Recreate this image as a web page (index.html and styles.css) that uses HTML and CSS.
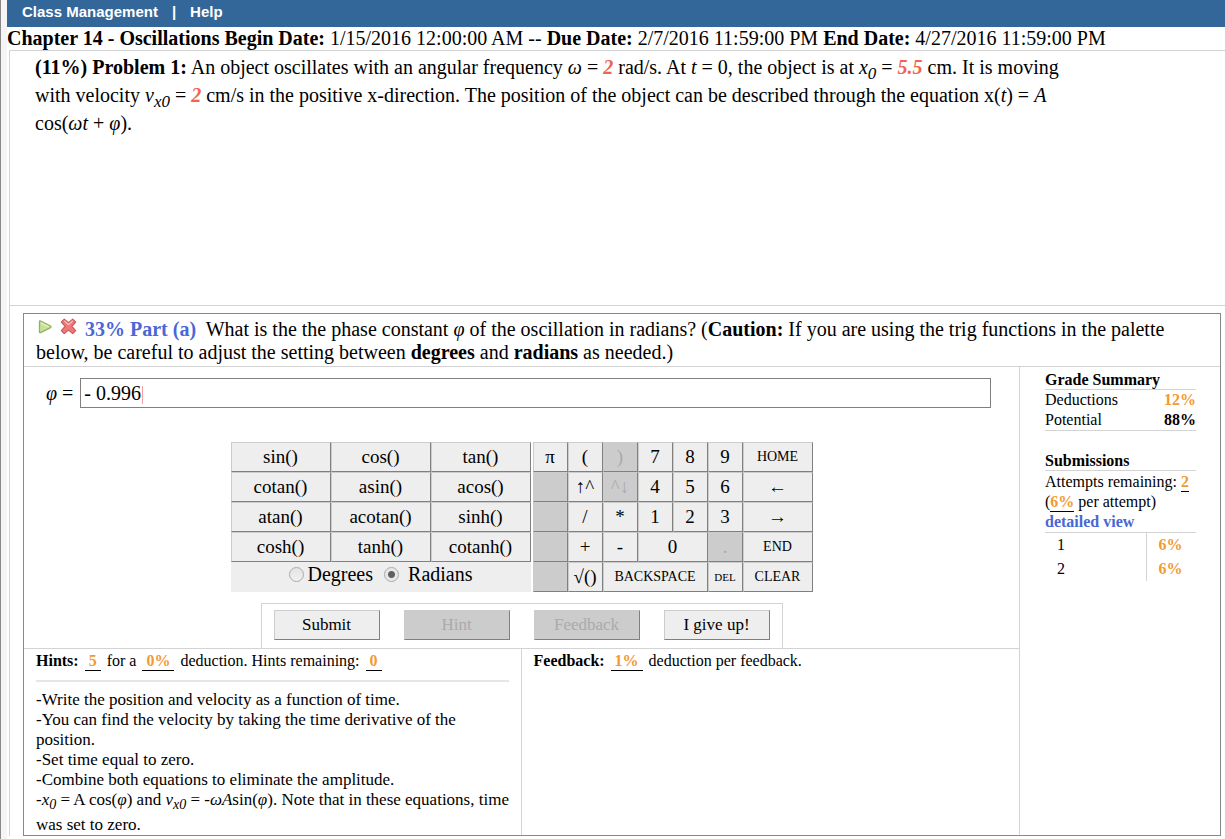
FILE: index.html
```html
<!DOCTYPE html>
<html lang="en">
<head>
  <meta charset="UTF-8">
  <meta name="viewport" content="width=device-width, initial-scale=1.0">
  <title>Chapter 14 - Oscillations</title>
  <link rel="stylesheet" href="styles.css">
</head>
<body>
  <div class="page">
    <!-- Top menu -->
    <nav class="menu">
      <a href="#">Class Management</a>
      <span>|</span>
      <a href="#">Help</a>
    </nav>

    <div class="dates">
      <b>Chapter 14 - Oscillations</b> <b>Begin Date:</b> 1/15/2016 12:00:00 AM -- <b>Due Date:</b> 2/7/2016 11:59:00 PM <b>End Date:</b> 4/27/2016 11:59:00 PM
    </div>

    <main class="assignment">
      <!-- Problem statement -->
      <section class="problem">
        <b>(11%) Problem 1:</b> An object oscillates with an angular frequency <i>ω</i> = <span class="value">2</span> rad/s. At <i>t</i> = 0, the object is at <i>x<sub>0</sub></i> = <span class="value">5.5</span> cm. It is moving with velocity <i>v<sub>x0</sub></i> = <span class="value">2</span> cm/s in the positive x-direction. The position of the object can be described through the equation x(<i>t</i>) = <i>A</i> cos(<i>ωt</i> + <i>φ</i>).
      </section>

      <!-- Part (a) -->
      <section class="part">
        <div class="question">
          <svg class="icon" width="16" height="16" viewBox="0 0 16 16">
            <path d="M3.5 2.5 Q3.5 1.5 4.6 2 L14.5 7 Q15.6 7.8 14.5 8.6 L4.6 13.6 Q3.5 14 3.5 13 Z" fill="#c9e29a" stroke="#8fb35c" stroke-width="1.3"/>
            <path d="M5 4 L12.5 7.8" stroke="#e6f3c8" stroke-width="1.2"/>
          </svg>
          <svg class="icon" width="17" height="17" viewBox="0 0 18 18">
            <path d="M4.5 1.2 L9 5 L13.5 1.2 L16.6 4.4 L12.6 8.8 L16.6 13.4 L13.5 16.6 L9 12.8 L4.5 16.6 L1.4 13.4 L5.4 8.8 L1.4 4.4 Z" fill="#f07878" stroke="#c85858" stroke-width="1.2" stroke-linejoin="round"/>
            <path d="M4.5 3 L9 7 L13.5 3" fill="none" stroke="#f9bcbc" stroke-width="1.4"/>
          </svg>
          <b class="part-name">33% Part (a)</b>&nbsp; What is the the phase constant <i>φ</i> of the oscillation in radians? (<b>Caution:</b> If you are using the trig functions in the palette below, be careful to adjust the setting between <b>degrees</b> and <b>radians</b> as needed.)
        </div>

        <div class="part-body">
          <div class="work">
            <div class="answer">
              <label for="answer"><i>φ</i> =</label>
              <input id="answer" type="text" value="- 0.996">
            </div>

            <!-- Palette: functions on the left, keypad on the right -->
            <div class="palette">
              <div class="functions">
                <button>sin()</button>
                <button>cos()</button>
                <button>tan()</button>
                <button>cotan()</button>
                <button>asin()</button>
                <button>acos()</button>
                <button>atan()</button>
                <button>acotan()</button>
                <button>sinh()</button>
                <button>cosh()</button>
                <button>tanh()</button>
                <button>cotanh()</button>
                <div class="units">
                  <input id="degrees" type="radio" name="unit">
                  <label for="degrees">Degrees</label>
                  <input id="radians" type="radio" name="unit" checked>
                  <label for="radians">Radians</label>
                </div>
              </div>
              <div class="keypad">
                <button>π</button>
                <button>(</button>
                <button disabled>)</button>
                <button>7</button>
                <button>8</button>
                <button>9</button>
                <button class="small">HOME</button>
                <button disabled aria-label="blank"></button>
                <button>↑^</button>
                <button disabled>^↓</button>
                <button>4</button>
                <button>5</button>
                <button>6</button>
                <button>←</button>
                <button disabled aria-label="blank"></button>
                <button>/</button>
                <button>*</button>
                <button>1</button>
                <button>2</button>
                <button>3</button>
                <button>→</button>
                <button disabled aria-label="blank"></button>
                <button>+</button>
                <button>-</button>
                <button class="wide-2">0</button>
                <button disabled>.</button>
                <button class="small">END</button>
                <button disabled aria-label="blank"></button>
                <button>√()</button>
                <button class="small wide-3">BACKSPACE</button>
                <button class="tiny">DEL</button>
                <button class="small">CLEAR</button>
              </div>
            </div>

            <div class="actions">
              <button>Submit</button>
              <button disabled>Hint</button>
              <button disabled>Feedback</button>
              <button>I give up!</button>
            </div>

            <div class="help">
              <div class="hints">
                <div><b>Hints:</b> <span class="blank">5</span> for a <span class="blank">0%</span> deduction. Hints remaining: <span class="blank">0</span></div>
                <hr>
                <div class="hint-list">
                  -Write the position and velocity as a function of time.<br>
                  -You can find the velocity by taking the time derivative of the position.<br>
                  -Set time equal to zero.<br>
                  -Combine both equations to eliminate the amplitude.<br>
                  -<i>x<sub>0</sub></i> = A cos(<i>φ</i>) and <i>v<sub>x0</sub></i> = -<i>ωA</i>sin(<i>φ</i>). Note that in these equations, time was set to zero.
                </div>
              </div>
              <div class="feedback">
                <b>Feedback:</b> <span class="blank">1%</span> deduction per feedback.
              </div>
            </div>
          </div>

          <!-- Grade column -->
          <aside class="grades">
            <h2>Grade Summary</h2>
            <table class="summary">
              <tr><td>Deductions</td><td class="percent">12%</td></tr>
              <tr><td>Potential</td><td><b>88%</b></td></tr>
            </table>
            <h2>Submissions</h2>
            <div class="attempts">
              Attempts remaining: <span class="underlined">2</span><br>
              (<span class="underlined">6%</span> per attempt)<br>
              <a href="#">detailed view</a>
            </div>
            <table class="submissions">
              <tr><td>1</td><td class="percent">6%</td></tr>
              <tr><td>2</td><td class="percent">6%</td></tr>
            </table>
          </aside>
        </div>
      </section>
    </main>
  </div>
</body>
</html>
```
FILE: styles.css
```css
* {
  box-sizing: border-box;
}

body {
  margin: 0;
  background: #fff;
  color: #000;
  font-family: "Liberation Serif", "Times New Roman", serif;
  font-size: 16px;
}

button,
input {
  font-family: inherit;
}

/* Grey strip down the left side of the window */
.page {
  min-height: 100vh;
  border-left: 1px solid #888;
  padding-left: 6px;
  background: linear-gradient(#f5f5f5, #f5f5f5) left / 6px 100% no-repeat;
}

.menu {
  display: flex;
  gap: 14px;
  height: 27px;
  padding: 0 15px;
  background: #336699;
  color: #fff;
  font: bold 15px/24px "Liberation Sans", Arial, sans-serif;
}

.menu a {
  color: #fff;
  text-decoration: none;
}

.dates {
  font-size: 20px;
  line-height: 23px;
}

.assignment {
  margin-left: 2px;
  border: 1px solid #d3d3d3;
  border-width: 1px 0 0 1px;
}

/* Problem statement */
.problem {
  min-height: 255px;
  padding: 2px 150px 0 25px;
  border-bottom: 1px solid #d3d3d3;
  font-size: 20px;
  line-height: 28px;
}

sub {
  font-size: 17px;
  line-height: 0;
}

.value {
  color: #f06450;
  font-style: italic;
  font-weight: bold;
}

/* Part box */
.part {
  margin: 7px 4px 0 13px;
  border: 1px solid #888;
}

.question {
  padding: 4px 40px 2px 12px;
  border-bottom: 1px solid #d3d3d3;
  font-size: 20px;
  line-height: 23px;
}

.icon {
  margin-right: 3px;
  vertical-align: 1px;
}

.part-name {
  color: #4a67d6;
}

.part-body {
  display: flex;
}

.work {
  flex: 1;
}

.answer {
  display: flex;
  align-items: center;
  gap: 7px;
  padding: 11px 28px 0 22px;
  font-size: 20px;
}

/* The pink caret is a 1px background stripe */
.answer input {
  flex: 1;
  height: 30px;
  padding: 0 3px;
  border: 1px solid #808080;
  background: linear-gradient(#f4a0a8, #f4a0a8) 61px 7px / 1px 18px no-repeat #fff;
  font-size: 20px;
}

/* Palette */
.palette {
  display: flex;
  justify-content: center;
  gap: 2px;
  margin-top: 34px;
}

.functions,
.keypad {
  display: grid;
  grid-auto-rows: 30px;
  background: #eee;
}

.functions {
  grid-template-columns: repeat(3, 100px);
}

.keypad {
  grid-template-columns: repeat(6, 35px) 70px;
}

.palette button,
.actions button {
  padding: 0;
  border: 1px solid #ccc;
  border-right-color: #808080;
  border-bottom-color: #808080;
  background: #eee;
  color: #000;
  font-size: 19px;
}

.palette button:disabled,
.actions button:disabled {
  background: #ccc;
  color: #aaa;
}

.palette .small {
  font-size: 14px;
}

.palette .tiny {
  font-size: 11px;
}

.wide-2 {
  grid-column: span 2;
}

.wide-3 {
  grid-column: span 3;
}

.units {
  display: flex;
  grid-column: 1 / -1;
  justify-content: center;
  align-items: center;
  gap: 4px;
  padding-bottom: 5px;
  font-size: 20px;
}

.units input {
  appearance: none;
  width: 15px;
  height: 15px;
  margin: 0;
  border: 1px solid #aaa;
  border-radius: 50%;
  background: linear-gradient(#e4e4e4, #f0f0f0);
}

.units input:checked {
  margin-left: 7px;
  margin-right: 5px;
  background: radial-gradient(circle, #606060 3px, #e8e8e8 4px);
}

/* Submit, Hint, Feedback, I give up! */
.actions {
  display: flex;
  justify-content: space-between;
  width: 522px;
  margin: 11px auto 0;
  padding: 6px 12px 8px;
  border: 1px solid #d3d3d3;
  border-bottom: 0;
}

.actions button {
  width: 106px;
  height: 30px;
  font-size: 17px;
}

/* Hints and feedback */
.help {
  display: grid;
  grid-template-columns: 1fr 1fr;
  border-top: 1px solid #d3d3d3;
  line-height: 20px;
}

.hints {
  min-height: 186px;
  padding: 2px 4px 0 12px;
  border-right: 1px solid #d3d3d3;
}

.hints hr {
  height: 2px;
  margin: 9px 8px 8px 0;
  border: 0;
  background: #e6e6e6;
}

.feedback {
  padding: 2px 12px;
}

.blank {
  display: inline-block;
  margin: 0 2px;
  padding: 0 4px;
  border-bottom: 1px solid #000;
  color: #f39a32;
  font-weight: bold;
  line-height: 18px;
}

.hint-list {
  font-size: 17px;
}

.hint-list sub {
  font-size: 14px;
  line-height: 20px;
}

/* Grade column */
.grades {
  width: 201px;
  padding: 3px 24px 0 25px;
  border-left: 1px solid #d3d3d3;
  line-height: 20px;
}

.grades h2 {
  margin: 0;
  border-bottom: 1px solid #d3d3d3;
  font-size: 16px;
  line-height: 19px;
}

.grades table {
  width: 100%;
  border-collapse: collapse;
}

.grades td {
  padding: 0;
}

.summary {
  margin-bottom: 20px;
  border-bottom: 1px solid #d3d3d3;
}

.summary td:last-child {
  text-align: right;
}

.percent,
.underlined {
  color: #f39a32;
  font-weight: bold;
}

.underlined {
  display: inline-block;
  border-bottom: 1px solid #000;
  line-height: 18px;
}

.attempts {
  padding-top: 1px;
  border-bottom: 1px solid #d3d3d3;
}

.attempts a {
  color: #4a67d6;
  font-weight: bold;
  text-decoration: none;
}

.grades .submissions td {
  height: 24px;
  padding-left: 12px;
}

.submissions td:first-child {
  width: 101px;
  border-right: 1px solid #d3d3d3;
}
```
